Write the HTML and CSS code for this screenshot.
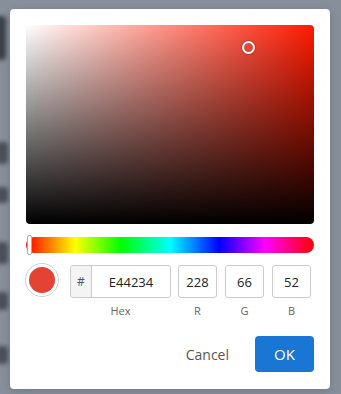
FILE: index.html
```html
<!DOCTYPE html>
<html lang="en">
<head>
    <meta charset="UTF-8">
    <meta name="viewport" content="width=device-width, initial-scale=1.0">
    <title>Color Picker</title>
    <link rel="stylesheet" href="styles.css">
</head>
<body>

<div class="backdrop">
    <div class="blob blob-1"></div>
    <div class="blob blob-2"></div>
    <div class="blob blob-3"></div>
    <div class="blob blob-4"></div>
    <div class="blob blob-5"></div>
    <div class="blob blob-6"></div>
</div>

<div class="dialog">
    <div class="saturation">
        <div class="pointer"></div>
    </div>

    <div class="hue">
        <div class="hue-handle"></div>
    </div>

    <div class="fields">
        <div class="swatch"><div class="swatch-fill"></div></div>

        <div class="field field-hex">
            <div class="hex-box">
                <span class="hex-prefix">#</span>
                <input class="hex-input" type="text" value="E44234">
            </div>
            <label>Hex</label>
        </div>
        <div class="field">
            <input class="num-input" type="text" value="228">
            <label>R</label>
        </div>
        <div class="field">
            <input class="num-input" type="text" value="66">
            <label>G</label>
        </div>
        <div class="field">
            <input class="num-input" type="text" value="52">
            <label>B</label>
        </div>
    </div>

    <div class="actions">
        <button class="btn-cancel">Cancel</button>
        <button class="btn-ok">OK</button>
    </div>
</div>

</body>
</html>
```

FILE: styles.css
```css
body {
    font-family: 'Open Sans', 'Noto Sans', sans-serif;
    background-color: #878f9a;
    margin: 0;
    padding: 9px 11px 6px 10px;
    position: relative;
    overflow: hidden;
}

/* blurred page behind the dialog */
.backdrop {
    position: absolute;
    left: 0;
    top: 0;
    width: 12px;
    height: 394px;
    filter: blur(2px);
}

.blob {
    position: absolute;
    left: -4px;
    width: 12px;
    background-color: #4a505a;
    border-radius: 4px;
}

.blob-1 { top: 16px; height: 44px; width: 10px; background-color: #3a3f48; }
.blob-2 { top: 142px; height: 22px; }
.blob-3 { top: 187px; height: 16px; }
.blob-4 { top: 242px; height: 22px; }
.blob-5 { top: 292px; height: 18px; }
.blob-6 { top: 346px; height: 18px; }

.dialog {
    position: relative;
    background-color: #fff;
    border-radius: 4px;
    padding: 16px 16px 17px 16px;
    box-shadow: 0 2px 8px rgba(0, 0, 0, 0.15);
}

.saturation {
    position: relative;
    height: 199px;
    border-radius: 4px;
    background:
        linear-gradient(to top, #000, rgba(0, 0, 0, 0)),
        linear-gradient(to right, #fff, rgba(255, 255, 255, 0)),
        #ff1a00;
}

.pointer {
    position: absolute;
    left: 216px;
    top: 16px;
    width: 9px;
    height: 9px;
    border: 2px solid #fff;
    border-radius: 50%;
    box-shadow: 0 0 2px rgba(0, 0, 0, 0.6);
}

.hue {
    position: relative;
    height: 16px;
    margin-top: 13px;
    border-radius: 8px;
    background: linear-gradient(to right, #f00 0%, #ff0 17%, #0f0 33%, #0ff 50%, #00f 67%, #f0f 83%, #f00 100%);
}

.hue-handle {
    position: absolute;
    left: 1px;
    top: -2px;
    width: 3px;
    height: 18px;
    background-color: #fff;
    border: 1px solid #aaa;
    border-radius: 2px;
}

.fields {
    display: flex;
    align-items: flex-start;
    margin-top: 10px;
}

.swatch {
    width: 26px;
    height: 26px;
    padding: 3px;
    border: 1px solid #d0d0d0;
    border-radius: 50%;
    margin-left: -1px;
    margin-right: 11px;
    flex-shrink: 0;
}

.swatch-fill {
    width: 100%;
    height: 100%;
    border-radius: 50%;
    background-color: #e44234;
}

.field {
    display: flex;
    flex-direction: column;
    align-items: center;
    margin-top: 2px;
    margin-left: 8px;
}

.field-hex {
    margin-left: 0;
    margin-right: -1px;
}

.field label {
    font-size: 11px;
    color: #666;
    margin-top: 5px;
}

.hex-box {
    display: flex;
    width: 101px;
    height: 33px;
    border: 1px solid #ccc;
    border-radius: 3px;
    box-sizing: border-box;
    overflow: hidden;
}

.hex-prefix {
    width: 20px;
    background-color: #f4f4f4;
    border-right: 1px solid #ccc;
    color: #555;
    font-size: 12px;
    display: flex;
    justify-content: center;
    align-items: center;
}

.hex-input, .num-input {
    font-family: 'Open Sans', 'Noto Sans', sans-serif;
    font-size: 13px;
    color: #222;
    text-align: center;
    border: none;
    outline: none;
    padding: 0;
    background: transparent;
}

.hex-input {
    flex: 1;
    width: 0;
}

.num-input {
    width: 39px;
    height: 33px;
    border: 1px solid #ccc;
    border-radius: 3px;
    box-sizing: border-box;
}

.actions {
    display: flex;
    justify-content: flex-end;
    align-items: center;
    gap: 26px;
    margin-top: 18px;
}

button {
    font-family: 'Open Sans', 'Noto Sans', sans-serif;
    font-size: 14px;
    cursor: pointer;
    border: none;
    border-radius: 4px;
}

.btn-cancel {
    background: none;
    color: #555;
    padding: 0;
}

.btn-ok {
    background-color: #1976d2;
    color: #fff;
    font-size: 15px;
    width: 59px;
    height: 36px;
}
```
